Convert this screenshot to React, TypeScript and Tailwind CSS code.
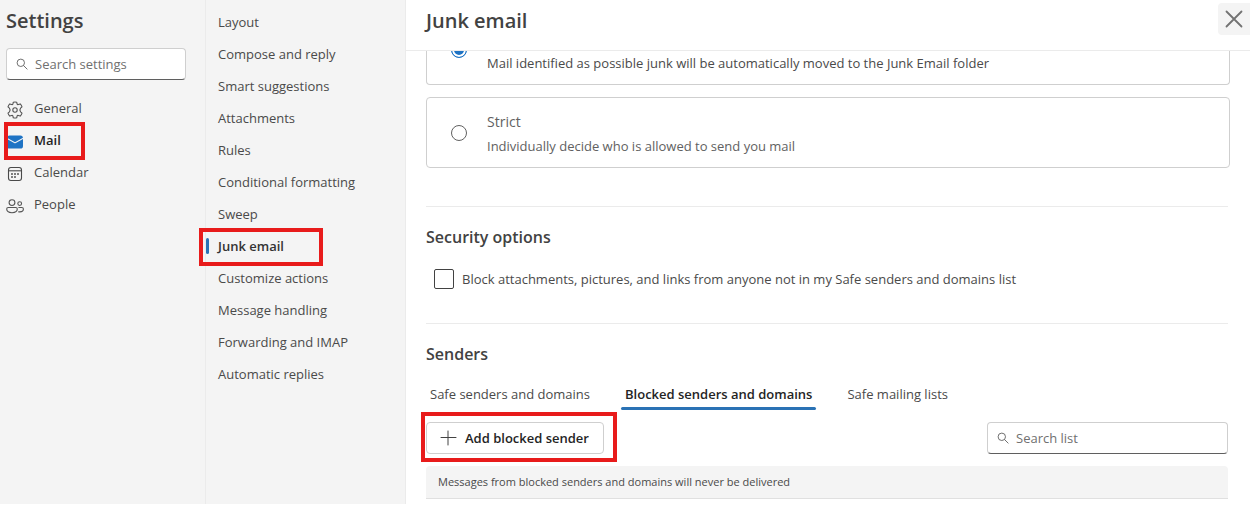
import React, { useState } from 'react';

const SECTIONS = [
  { name: 'General', icon: GearIcon },
  { name: 'Mail', icon: MailIcon },
  { name: 'Calendar', icon: CalendarIcon },
  { name: 'People', icon: PeopleIcon },
];

const MAIL_PAGES = [
  'Layout',
  'Compose and reply',
  'Smart suggestions',
  'Attachments',
  'Rules',
  'Conditional formatting',
  'Sweep',
  'Junk email',
  'Customize actions',
  'Message handling',
  'Forwarding and IMAP',
  'Automatic replies',
];

const TABS = ['Safe senders and domains', 'Blocked senders and domains', 'Safe mailing lists'];

const RADIO =
  'h-4 w-4 appearance-none rounded-full border border-[#616161] checked:border-[#1e73c4] checked:bg-[#1e73c4] checked:shadow-[inset_0_0_0_2px_white]';

function GearIcon() {
  return (
    <svg viewBox="0 0 18 18" className="w-[18px] h-[18px]" fill="none" stroke="#555" strokeWidth="1.1" strokeLinejoin="round">
      <path d="M7.3 1.2 Q9 .8 10.7 1.2 L11.1 3.1 Q11.5 3.9 12.4 3.6 L14.2 2.9 Q15.5 4.2 16 5.9 L14.6 7.2 Q13.2 9 14.6 10.8 L16 12.1 Q15.5 13.8 14.2 15.1 L12.4 14.4 Q11.5 14.1 11.1 14.9 L10.7 16.8 Q9 17.2 7.3 16.8 L6.9 14.9 Q6.5 14.1 5.6 14.4 L3.8 15.1 Q2.5 13.8 2 12.1 L3.4 10.8 Q4.8 9 3.4 7.2 L2 5.9 Q2.5 4.2 3.8 2.9 L5.6 3.6 Q6.5 3.9 6.9 3.1 Z" />
      <circle cx="9" cy="9" r="2.2" />
    </svg>
  );
}

function MailIcon() {
  return (
    <svg viewBox="0 0 18 18" className="w-[18px] h-[18px]" fill="#1e73c4">
      <path d="M1 5.9 8.6 10.2a.8.8 0 0 0 .8 0L17 5.9V13a2.6 2.6 0 0 1-2.6 2.6H3.6A2.6 2.6 0 0 1 1 13Z" />
      <path d="M3.6 2.6h10.8A2.6 2.6 0 0 1 17 4.8L9 9.2 1 4.8a2.6 2.6 0 0 1 2.6-2.2Z" />
    </svg>
  );
}

function CalendarIcon() {
  return (
    <svg viewBox="0 0 18 18" className="w-[18px] h-[18px]" fill="none" stroke="#4a4a4a" strokeWidth="1.1">
      <rect x="2.5" y="2.5" width="13" height="13" rx="2.4" />
      <path d="M2.5 5.8h13" />
      <g fill="#4a4a4a" stroke="none">
        <circle cx="6" cy="9" r="0.95" />
        <circle cx="9" cy="9" r="0.95" />
        <circle cx="12" cy="9" r="0.95" />
        <circle cx="6" cy="12" r="0.95" />
        <circle cx="9" cy="12" r="0.95" />
      </g>
    </svg>
  );
}

function PeopleIcon() {
  return (
    <svg viewBox="0 0 18 18" className="w-[18px] h-[18px]" fill="none" stroke="#555" strokeWidth="1.1">
      <circle cx="6" cy="5.6" r="2.9" />
      <circle cx="13.7" cy="6.6" r="1.9" />
      <path d="M2.3 10.5h7.4c.9 0 1.6.7 1.6 1.6 0 2.3-2.2 3.6-5.3 3.6S.7 14.4.7 12.1c0-.9.7-1.6 1.6-1.6Z" />
      <path d="M12.4 10.5h3.4c.9 0 1.6.7 1.6 1.6 0 1.8-1.5 2.8-3.6 2.8-.6 0-1.1-.1-1.6-.2" />
    </svg>
  );
}

function SearchIcon() {
  return (
    <svg viewBox="0 0 12 12" className="w-3 h-3 shrink-0" fill="none" stroke="#707070" strokeWidth="1">
      <circle cx="4.8" cy="4.8" r="3.7" />
      <path d="m7.5 7.5 3.6 3.6" strokeLinecap="round" />
    </svg>
  );
}

/** Red outline that calls out a step; sits over its relative parent. */
const Highlight: React.FC<{ className: string }> = ({ className }) => (
  <span aria-hidden="true" className={`absolute border-4 border-[#e81b1b] pointer-events-none ${className}`} />
);

const SearchBox: React.FC<{ label: string; className?: string }> = ({ label, className = '' }) => (
  <label
    className={`flex h-8 items-center gap-[7px] rounded border border-[#cfcfcf] border-b-[#5f5f5f] bg-white px-[9px] ${className}`}
  >
    <SearchIcon />
    <input
      type="text"
      aria-label={label}
      placeholder={label}
      className="min-w-0 flex-1 bg-transparent text-[13px] text-[#424242] outline-none placeholder:text-[#707070]"
    />
  </label>
);

export default function App() {
  const [filter, setFilter] = useState('standard');
  const [tab, setTab] = useState(TABS[1]);

  return (
    <div className="flex bg-white pb-px font-['Open_Sans','Noto_Sans',sans-serif] text-[13px] leading-5 text-[#4a4a4a]">
      <aside className="w-[206px] shrink-0 border-r border-[#ebebeb] bg-[#f4f4f4]">
        <h1 className="px-[6px] pt-[9px] text-xl leading-6 font-semibold text-[#424242]">Settings</h1>
        <SearchBox label="Search settings" className="mx-[6px] mt-[15px] w-[180px]" />
        <nav aria-label="Settings sections" className="mt-3">
          {SECTIONS.map(({ name, icon: Icon }) => (
            <a
              key={name}
              href={`#${name.toLowerCase()}`}
              className={`relative flex h-8 items-center gap-[10px] px-[6px] ${name === 'Mail' ? 'font-semibold text-[#242424]' : ''}`}
            >
              <span className="pt-1"><Icon /></span>
              {name}
              {name === 'Mail' && <Highlight className="left-1 -top-[2px] h-[38px] w-[81px]" />}
            </a>
          ))}
        </nav>
      </aside>

      <nav aria-label="Mail settings" className="w-[200px] shrink-0 border-r border-[#ebebeb] bg-[#f4f4f4] pt-[6px]">
        {MAIL_PAGES.map(page => (
          <a
            key={page}
            href={`#${page.toLowerCase().replace(/ /g, '-')}`}
            className={`relative flex h-8 items-center pl-3 ${page === 'Junk email' ? 'font-semibold text-[#333]' : ''}`}
          >
            {page}
            {page === 'Junk email' && (
              <>
                <span className="absolute left-0 h-4 w-[3px] rounded-full bg-[#2a72b5]" />
                <Highlight className="-left-[7px] -top-[2px] h-[38px] w-[124px]" />
              </>
            )}
          </a>
        ))}
      </nav>

      <main className="min-w-0 flex-1">
        <header className="flex h-[51px] items-start justify-between border-b border-[#ebebeb] pl-5">
          <h2 className="pt-[9px] text-xl leading-6 font-semibold text-[#424242]">Junk email</h2>
          <button aria-label="Close" className="mt-[3px] flex h-8 w-8 items-center justify-center rounded-l bg-[#f4f4f4]">
            <svg viewBox="0 0 18 18" className="w-[18px] h-[18px]" stroke="#737373" strokeWidth="1.8" strokeLinecap="round">
              <path d="m1.5 1.5 15 15M16.5 1.5l-15 15" />
            </svg>
          </button>
        </header>

        <div className="pb-[5px] pl-5">
          <div className="mr-5 flex flex-col gap-3">
            {/* scrolled partly under the header, only its lower half shows */}
            <label className="flex h-[34px] items-start gap-5 overflow-hidden rounded-b border border-t-0 border-[#cfcfcf] pl-6">
              <input
                type="radio"
                name="filter"
                aria-label="Standard"
                checked={filter === 'standard'}
                onChange={() => setFilter('standard')}
                className={`-mt-[9px] ${RADIO}`}
              />
              <span className="pt-[2px]">
                Mail identified as possible junk will be automatically moved to the Junk Email folder
              </span>
            </label>
            <label className="flex h-[71px] items-center gap-5 rounded border border-[#cfcfcf] pl-6 text-[#616161]">
              <input
                type="radio"
                name="filter"
                checked={filter === 'strict'}
                onChange={() => setFilter('strict')}
                className={RADIO}
              />
              <span className="flex flex-col gap-1 pt-[2px]">
                <span className="text-sm leading-5">Strict</span>
                <span>Individually decide who is allowed to send you mail</span>
              </span>
            </label>
          </div>

          <section className="mt-[38px] mr-[22px] border-t border-[#ebebeb] pt-5">
            <h3 className="text-base leading-5 font-semibold text-[#424242]">Security options</h3>
            <label className="mt-[22px] flex items-center gap-2 pl-2">
              <input type="checkbox" className="h-5 w-5 appearance-none rounded-xs border border-[#424242] checked:bg-[#1e73c4]" />
              Block attachments, pictures, and links from anyone not in my Safe senders and domains list
            </label>
          </section>

          <section className="mt-[34px] mr-[22px] border-t border-[#ebebeb] pt-5">
            <h3 className="text-base leading-5 font-semibold text-[#424242]">Senders</h3>
            <div role="tablist" className="mt-5 flex gap-[27px]">
              {TABS.map(name => (
                <button
                  key={name}
                  role="tab"
                  aria-selected={tab === name}
                  onClick={() => setTab(name)}
                  className="relative px-1 pb-[6px] aria-selected:font-semibold aria-selected:text-[#242424]"
                >
                  {name}
                  {tab === name && <span className="absolute inset-x-0 bottom-0 h-[3px] rounded-full bg-[#2a72b5]" />}
                </button>
              ))}
            </div>

            <div className="mt-3 flex justify-between">
              <div className="relative">
                <button className="flex h-8 items-center gap-2 rounded border border-[#cfcfcf] pr-[14px] pl-3 font-semibold text-[#242424]">
                  <svg viewBox="0 0 18 18" className="w-[18px] h-[18px]" fill="none" stroke="#424242" strokeWidth="1" strokeLinecap="round">
                    <path d="M9 2v14M2 8.5h15" />
                  </svg>
                  Add blocked sender
                </button>
                <Highlight className="-top-[10px] -left-[5px] h-[50px] w-[196px]" />
              </div>
              <SearchBox label="Search list" className="w-[241px]" />
            </div>

            <p className="mt-3 rounded-t border-b border-[#e0e0e0] bg-[#f4f4f4] px-3 py-[6px] text-[11px] leading-5">
              Messages from blocked senders and domains will never be delivered
            </p>
          </section>
        </div>
      </main>
    </div>
  );
}
